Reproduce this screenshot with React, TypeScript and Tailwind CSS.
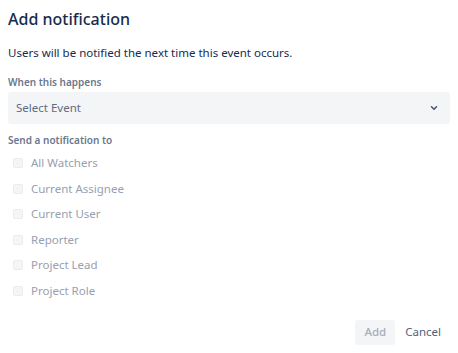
const targets = [
  "All Watchers",
  "Current Assignee",
  "Current User",
  "Reporter",
  "Project Lead",
  "Project Role",
];

export default function App() {
  return (
    <div
      className="w-[458px] h-[353px] bg-white px-2 text-[#172B4D]"
      style={{ fontFamily: '"Noto Sans", "Open Sans", sans-serif' }}
    >
      <h1 className="pt-[7px] text-[16px] leading-[24px] font-medium">Add notification</h1>

      <p className="mt-[14px] text-[11.5px] leading-[16px]">
        Users will be notified the next time this event occurs.
      </p>

      <label className="block mt-[14px] text-[10px] leading-[14px] font-semibold text-[#6B778C]">
        When this happens
      </label>
      <button className="mt-[3px] w-full h-[32px] rounded-[3px] bg-[#F4F5F7] flex items-center justify-between pl-2 pr-[11px] text-[11.5px] text-[#5E6C84]">
        <span>Select Event</span>
        <svg width="10" height="10" viewBox="0 0 24 24" fill="none">
          <path d="M6 9l6 6 6-6" stroke="#42526E" strokeWidth="3.5" strokeLinecap="round" strokeLinejoin="round" />
        </svg>
      </button>

      <div className="mt-[9px] text-[10px] leading-[14px] font-semibold text-[#6B778C]">
        Send a notification to
      </div>

      <ul className="mt-[8px] flex flex-col gap-[9.5px] pl-[5px]">
        {targets.map((t) => (
          <li key={t} className="flex items-center h-[16px] gap-[8px]">
            <span className="w-[10px] h-[10px] rounded-[2px] bg-[#F4F5F7] border border-[#EBECF0]" />
            <span className="text-[11.5px] text-[#97A0AF]">{t}</span>
          </li>
        ))}
      </ul>

      <div className="mt-[21px] flex justify-end items-center gap-[1px]">
        <button className="h-[25px] px-[9px] rounded-[3px] bg-[#F4F5F7] text-[11.5px] font-medium text-[#A5ADBA]">
          Add
        </button>
        <button className="h-[25px] px-[9px] rounded-[3px] text-[11.5px] text-[#505F79]">
          Cancel
        </button>
      </div>
    </div>
  );
}
